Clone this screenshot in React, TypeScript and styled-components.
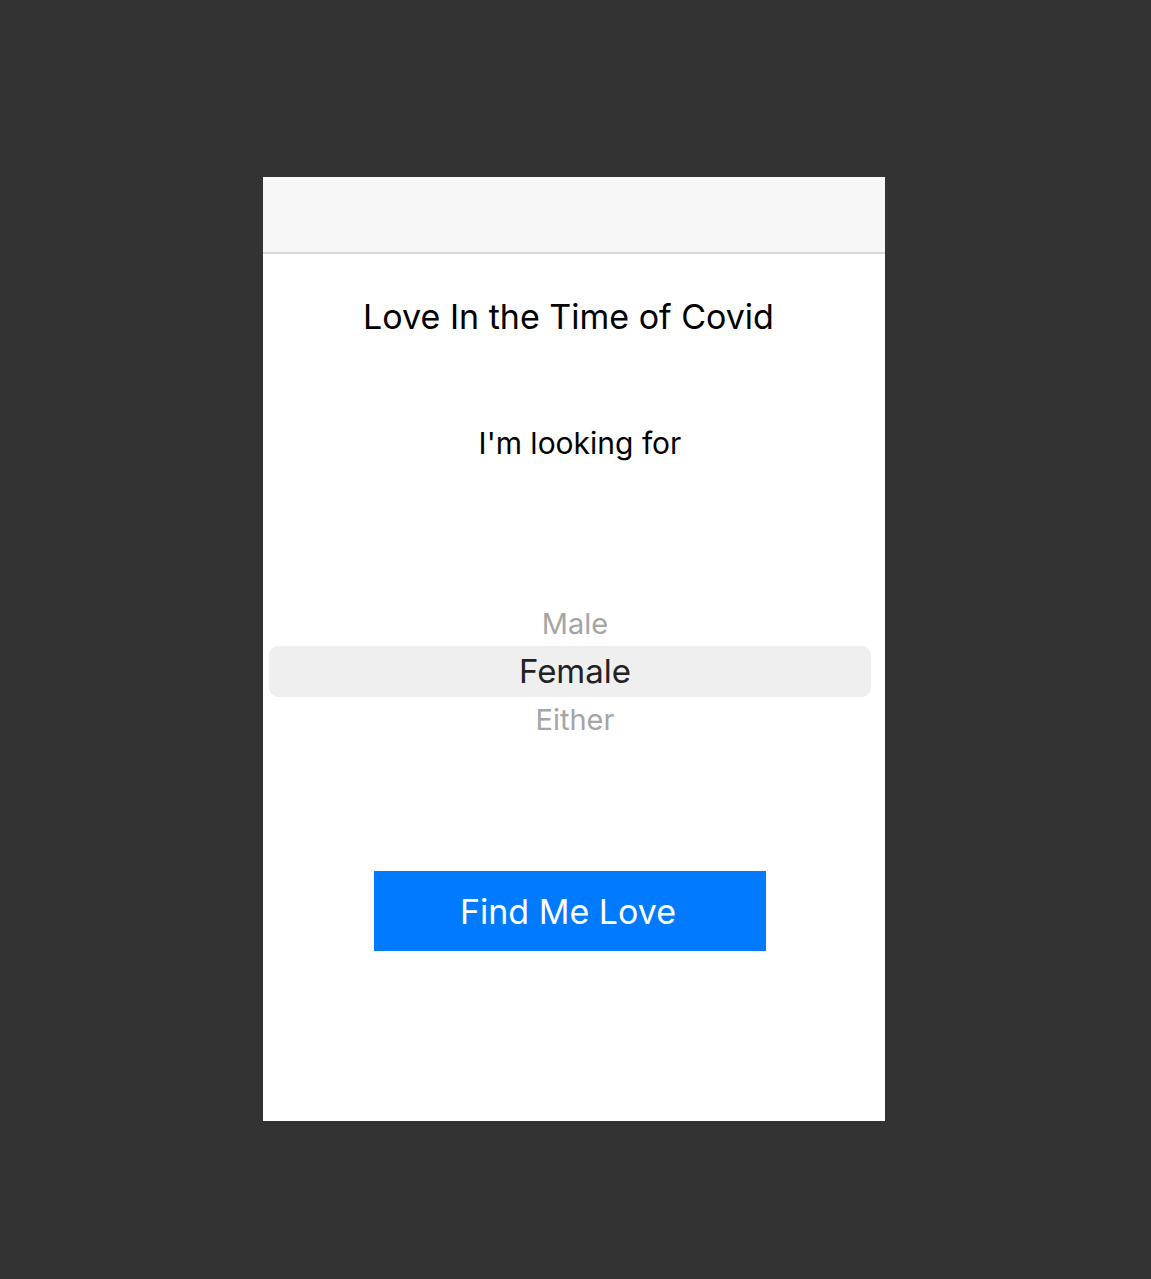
import React from "react";
import styled, { createGlobalStyle } from "styled-components";

const Global = createGlobalStyle`
  html, body {
    margin: 0;
    padding: 0;
    background: #333333;
  }
  body {
    font-family: Inter, "Noto Sans", "Liberation Sans", sans-serif;
  }
`;

const Stage = styled.div`
  min-height: 1279px;
  padding: 177px 0 0 263px;
  box-sizing: border-box;
`;

const Phone = styled.div`
  width: 622px;
  height: 944px;
  background: #ffffff;
  display: flex;
  flex-direction: column;
`;

const NavBar = styled.div`
  height: 75px;
  background: #f7f7f7;
  border-bottom: 2px solid #d6d6d6;
  flex-shrink: 0;
`;

const Title = styled.h1`
  margin: 43px 0 0;
  padding-right: 11px;
  height: 40px;
  line-height: 40px;
  font-size: 34px;
  font-weight: 400;
  text-align: center;
  color: #000;
`;

const Subtitle = styled.p`
  margin: 86px 0 0;
  padding-left: 12px;
  height: 40px;
  line-height: 40px;
  font-size: 30px;
  text-align: center;
  color: #000;
`;

const Picker = styled.div`
  margin: 138px 0 0 6px;
  width: 602px;
  display: flex;
  flex-direction: column;
`;

const PickerRow = styled.div<{ $selected?: boolean }>`
  height: ${(p) => (p.$selected ? "51px" : "45px")};
  line-height: ${(p) => (p.$selected ? "51px" : "45px")};
  padding-left: 10px;
  text-align: center;
  font-size: ${(p) => (p.$selected ? "33px" : "29px")};
  color: ${(p) => (p.$selected ? "#222222" : "#a5a5a5")};
  background: ${(p) => (p.$selected ? "#efefef" : "transparent")};
  border-radius: 9px;
`;

const Button = styled.button`
  margin: 129px 0 0 111px;
  width: 392px;
  height: 80px;
  border: none;
  background: #007aff;
  color: #ffffff;
  font-family: inherit;
  font-size: 34px;
  padding: 0 4px 0 0;
  cursor: pointer;
`;

export default function App() {
  return (
    <>
      <Global />
      <Stage>
        <Phone>
          <NavBar />
          <Title>Love In the Time of Covid</Title>
          <Subtitle>I'm looking for</Subtitle>
          <Picker>
            <PickerRow>Male</PickerRow>
            <PickerRow $selected>Female</PickerRow>
            <PickerRow>Either</PickerRow>
          </Picker>
          <Button>Find Me Love</Button>
        </Phone>
      </Stage>
    </>
  );
}
